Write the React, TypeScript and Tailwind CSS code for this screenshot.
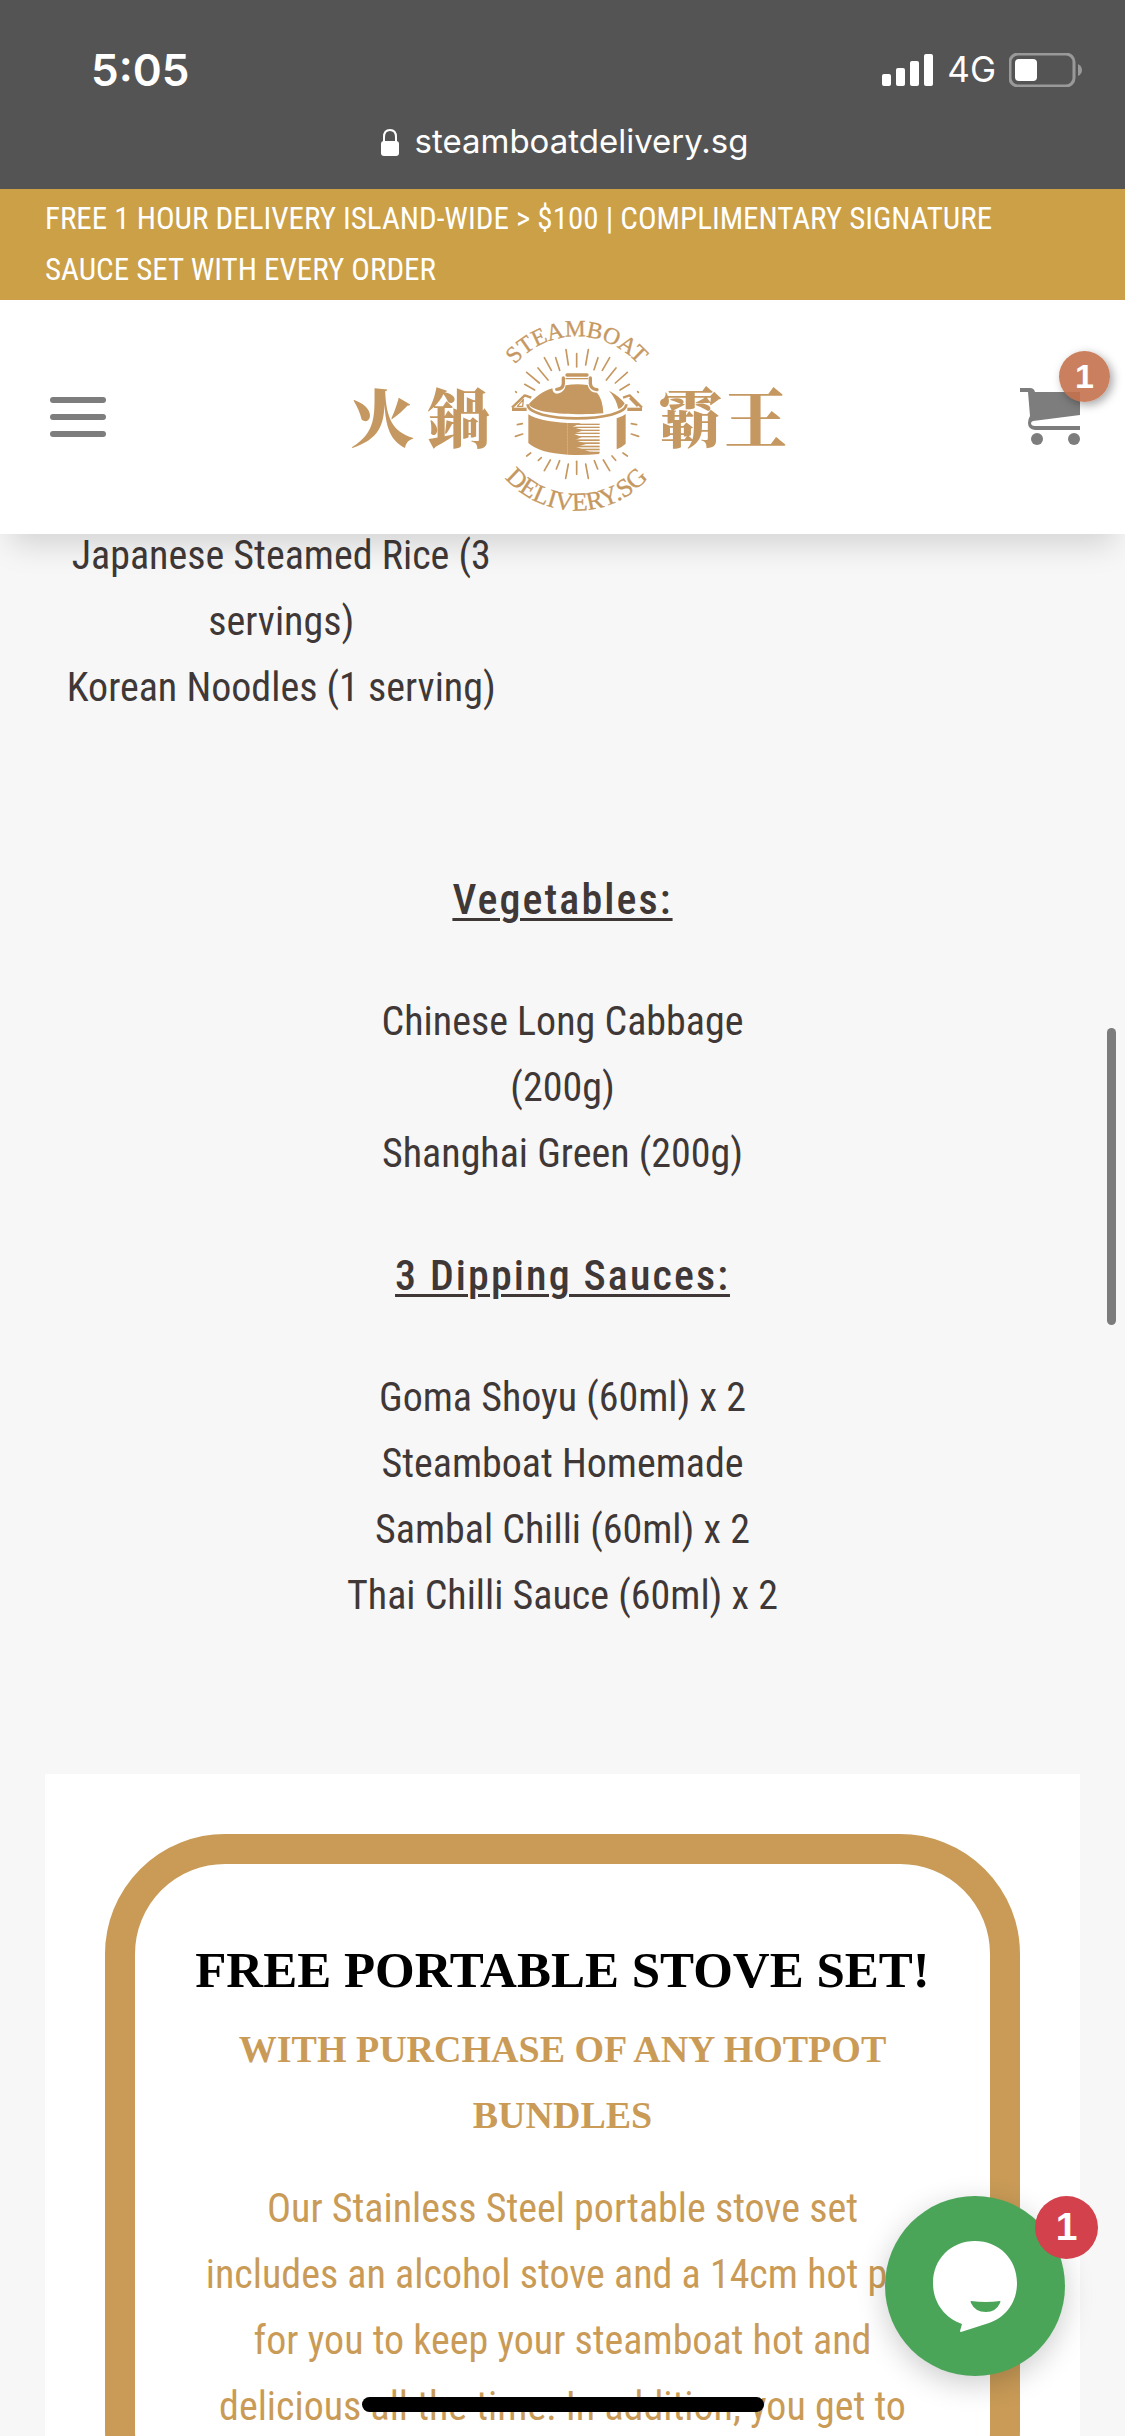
import type { ReactNode } from 'react'

const RAYS = [
    [713, 140, 713, 180], [681, 128, 688, 174], [748, 128, 740, 174],
    [650, 152, 662, 190], [777, 152, 765, 188], [616, 152, 637, 190],
    [812, 152, 790, 190], [597, 183, 627, 219], [831, 183, 802, 219],
    [563, 196, 601, 228], [865, 196, 829, 228], [557, 232, 587, 249],
    [871, 232, 843, 249], [530, 254, 532, 256], [896, 254, 898, 256],
    [535, 353, 550, 350], [529, 388, 551, 381], [877, 350, 893, 353],
    [877, 381, 899, 388], [563, 447, 575, 438], [598, 460, 607, 452],
    [616, 491, 634, 459], [652, 486, 662, 461], [680, 514, 688, 471],
    [713, 463, 713, 502], [748, 514, 740, 471], [776, 486, 766, 461],
    [812, 491, 793, 459], [819, 447, 830, 460], [852, 438, 865, 447],
]

// y, thickness
const HATCH = [
    [350, 4], [359, 4], [368, 4], [377, 4], [387, 4], [397, 5],
    [406, 5], [416, 5], [425, 5], [434, 5],
]

function Logo() {
    return (
        <svg
            viewBox="0 0 1380 660"
            className="w-[460px] h-[220px] fill-[#c69861]"
            role="img"
            aria-label="Steamboat Delivery.sg"
        >
            <defs>
                <path id="arc-top" d="M469 332 A244 244 0 0 1 957 332" />
                <path id="arc-bottom" d="M428 326 A285 285 0 0 0 998 326" />
            </defs>

            <g
                className="font-['Liberation_Serif',serif]"
                textAnchor="middle"
                stroke="#c69861"
                strokeWidth="1"
            >
                <text className="text-[70px]">
                    <textPath href="#arc-top" startOffset="50%">STEAMBOAT</textPath>
                </text>
                <text className="text-[77px]">
                    <textPath href="#arc-bottom" startOffset="50%">DELIVERY.SG</textPath>
                </text>
            </g>

            <g
                className="font-['Noto_Serif_CJK_TC','Noto_Sans_CJK_TC',serif] font-black text-[190px]"
                textAnchor="middle"
            >
                <text x="130" y="404">火</text>
                <text x="360" y="404">鍋</text>
                <text x="1054" y="404">霸</text>
                <text x="1250" y="404">王</text>
            </g>

            <g stroke="#c69861" strokeWidth="5" strokeLinecap="round">
                {RAYS.map(([x1, y1, x2, y2]) => (
                    <line key={`${x1}-${y1}`} x1={x1} y1={y1} x2={x2} y2={y2} />
                ))}
            </g>

            {/* side handles */}
            <g fill="none" stroke="#c69861" strokeLinejoin="round">
                <path d="M519 302 L557 265 L577 272" strokeWidth="7" />
                <path d="M519 307 H563" strokeWidth="10" />
                <path d="M535 298 L553 277 L551 298 Z" strokeWidth="4" />
                <path d="M909 302 L872 265 L852 272" strokeWidth="7" />
                <path d="M909 307 H865" strokeWidth="10" />
                <path d="M873 272 L897 297" strokeWidth="9" />
            </g>

            {/* pot body */}
            <path d="M568 322 Q600 343 686 348 V443 Q600 438 568 408 Z" />
            {HATCH.map(([y, h]) => (
                <rect key={y} x="686" y={y} width="96" height={h} />
            ))}
            <path d="M686 348 L726 349 L700 360 L734 370 L704 380 L728 390 L708 400 L744 410 L712 420 L752 434 L780 436 V441 Q730 446 686 443 Z" />
            <path d="M833 334 Q851 329 860 321 V410 Q850 420 833 427 Z" />

            {/* rim */}
            <path
                d="M566 292 C566 319 636 334 713 334 C790 334 862 319 862 292"
                fill="none"
                stroke="#c69861"
                strokeWidth="8"
            />

            {/* lid */}
            <path d="M570 291 C587 272 610 252 640 244 Q642 264 660 259 Q678 252 680 235 Q713 229 746 234 Q751 257 774 257 Q791 275 793 319 C730 325 580 323 570 291 Z" />
            <path d="M810 251 Q842 268 857 289 Q850 303 838 306 Q832 276 810 251 Z" />

            {/* knob */}
            <g fill="none" stroke="#c69861" strokeLinecap="round">
                <path d="M684 204 H744" strokeWidth="10" />
                <path d="M681 215 H746" strokeWidth="4" />
                <path d="M673 213 V230 Q672 247 653 247" strokeWidth="10" />
                <path d="M754 213 V230 Q756 247 774 248" strokeWidth="10" />
            </g>
        </svg>
    )
}

function CartIcon() {
    return (
        <svg viewBox="0 0 60 58" className="w-[60px] h-[58px] fill-[#7d7d7d]" aria-hidden="true">
            <path d="M0 0 H10 Q14 0 15 4 H60 V27 L13 33 Q11 34 11 35 Q11 38 15 38 H60 V42 H15 Q8 41 8 35 Q8 31 10 28 L8 4 H0 Z" />
            <circle cx="17" cy="51" r="6" />
            <circle cx="54" cy="51" r="6" />
        </svg>
    )
}

function StatusBar() {
    return (
        <div className="bg-[#545454] text-white font-['Inter','Liberation_Sans',sans-serif]">
            <div className="flex items-center justify-between h-[109px] pt-[30px] pl-[91px] pr-[43px]">
                <span className="text-[44px] font-semibold">5:05</span>
                <div className="flex items-center gap-[13px]">
                    <svg viewBox="0 0 52 32" className="w-[52px] h-8 fill-white" aria-hidden="true">
                        <rect x="0" y="20" width="9" height="12" rx="2" />
                        <rect x="14" y="14" width="9" height="18" rx="2" />
                        <rect x="28" y="7" width="9" height="25" rx="2" />
                        <rect x="42" y="0" width="9" height="32" rx="2" />
                    </svg>
                    <span className="text-[35px]">4G</span>
                    <svg viewBox="0 0 73 34" className="w-[73px] h-[34px]" aria-hidden="true">
                        <rect x="1" y="1" width="64" height="32" rx="8" fill="none" stroke="#999" strokeWidth="3" />
                        <rect x="6" y="6" width="22" height="22" rx="4" fill="#fff" />
                        <path d="M69 11 Q73 13 73 17 Q73 21 69 23 Z" fill="#999" />
                    </svg>
                </div>
            </div>
            <div className="flex items-center justify-center gap-4 h-20 pb-[14px] pl-1">
                <svg viewBox="0 0 18 27" className="w-[18px] h-[27px]" aria-hidden="true">
                    <rect x="0" y="12" width="18" height="15" rx="3" fill="#fff" />
                    <path d="M3 13 V8 Q3 1 9 1 Q15 1 15 8 V13" fill="none" stroke="#fff" strokeWidth="2" />
                </svg>
                <span className="text-[33px]">steamboatdelivery.sg</span>
            </div>
        </div>
    )
}

function Header() {
    return (
        <header className="relative z-10 grid grid-cols-[1fr_auto_1fr] items-center h-[234px] px-[45px] bg-white shadow-[0_20px_30px_-10px_rgba(0,0,0,0.15)]">
            <button type="button" aria-label="Menu" className="flex flex-col gap-[11px] w-[66px] p-[5px]">
                <span className="h-[6px] w-full rounded-full bg-[#7d7d7d]" />
                <span className="h-[6px] w-full rounded-full bg-[#7d7d7d]" />
                <span className="h-[6px] w-full rounded-full bg-[#7d7d7d]" />
            </button>
            <a href="#" className="ml-3">
                <Logo />
            </a>
            <button type="button" aria-label="Cart, 1 item" className="relative justify-self-end">
                <CartIcon />
                <span className="absolute -top-[37px] -right-[30px] flex items-center justify-center size-[51px] rounded-full bg-[#c4714ee6] text-white text-[34px] font-bold font-['Liberation_Sans',sans-serif] shadow-[3px_3px_10px_rgba(0,0,0,0.35)]">
                    1
                </span>
            </button>
        </header>
    )
}

function ListTitle({ children }: { children: ReactNode }) {
    return (
        <h3 className="text-[42px] leading-[66px] font-medium tracking-wider underline decoration-3 underline-offset-4">
            {children}
        </h3>
    )
}

export default function App() {
    return (
        <div className="relative flex flex-col h-screen overflow-hidden bg-[#f7f7f7] text-[#403837] font-['Roboto_Condensed',Roboto,sans-serif]">
            <StatusBar />

            <div className="relative z-20 h-[111px] px-[45px] pt-1 bg-[#cba046] text-white text-[31px] leading-[51px]">
                FREE 1 HOUR DELIVERY ISLAND-WIDE &gt; $100 | COMPLIMENTARY SIGNATURE
                <br />
                SAUCE SET WITH EVERY ORDER
            </div>

            <Header />

            <main className="flex-1 min-h-0 -mt-[11px] overflow-hidden text-center text-[40px] leading-[66px]">
                <section className="grid grid-cols-2">
                    <p>
                        Japanese Steamed Rice (3
                        <br />
                        servings)
                        <br />
                        Korean Noodles (1 serving)
                    </p>
                </section>

                <section className="flex flex-col gap-14 mt-[146px]">
                    <ListTitle>Vegetables:</ListTitle>
                    <p>
                        Chinese Long Cabbage
                        <br />
                        (200g)
                        <br />
                        Shanghai Green (200g)
                    </p>
                    <ListTitle>3 Dipping Sauces:</ListTitle>
                    <p>
                        Goma Shoyu (60ml) x 2
                        <br />
                        Steamboat Homemade
                        <br />
                        Sambal Chilli (60ml) x 2
                        <br />
                        Thai Chilli Sauce (60ml) x 2
                    </p>
                </section>

                <section className="mx-[45px] mt-[145px] p-[60px] bg-white">
                    <div className="px-8 pt-[68px] pb-20 border-[30px] border-[#c99b57] rounded-[120px] text-[#c99b57]">
                        <div className="font-['Liberation_Serif',serif] font-bold">
                            <h2 className="text-[51px] leading-[76px] text-black">FREE PORTABLE STOVE SET!</h2>
                            <h4 className="mt-2 text-[38px] leading-[66px]">
                                WITH PURCHASE OF ANY HOTPOT
                                <br />
                                BUNDLES
                            </h4>
                        </div>
                        <p className="mt-7">
                            Our Stainless Steel portable stove set
                            <br />
                            includes an alcohol stove and a 14cm hot pot
                            <br />
                            for you to keep your steamboat hot and
                            <br />
                            delicious all the time. In addition, you get to
                        </p>
                    </div>
                </section>
            </main>

            {/* scroll thumb */}
            <div className="absolute right-[9px] top-[1028px] w-[9px] h-[297px] rounded-full bg-[#7c7c7c]" />

            <button
                type="button"
                aria-label="Open chat, 1 unread message"
                className="absolute right-[60px] bottom-[60px] size-[180px] rounded-full bg-[#4ba559] shadow-[0_8px_30px_rgba(0,0,0,0.2)]"
            >
                <svg viewBox="0 0 180 180" className="size-full" aria-hidden="true">
                    <path
                        d="M90 45 C114 45 132 63 132 87 C132 108 119 122 104 127 L76 136 Q75 136 75 135 L77 128 C60 122 48 107 48 87 C48 63 66 45 90 45 Z"
                        fill="#fff"
                    />
                    <path d="M86 105 Q101 107 115 105 Q116 105 115 107 Q111 116 101 116 Q90 116 86 107 Q85 105 86 105 Z" fill="#4ba559" />
                </svg>
                <span className="absolute top-0 -right-[33px] flex items-center justify-center size-[63px] rounded-full bg-[#d3414d] text-white text-[39px] font-bold font-['Liberation_Sans',sans-serif]">
                    1
                </span>
            </button>

            {/* home indicator */}
            <div className="absolute left-1/2 bottom-6 w-[402px] h-[15px] -translate-x-1/2 rounded-full bg-black" />
        </div>
    )
}
